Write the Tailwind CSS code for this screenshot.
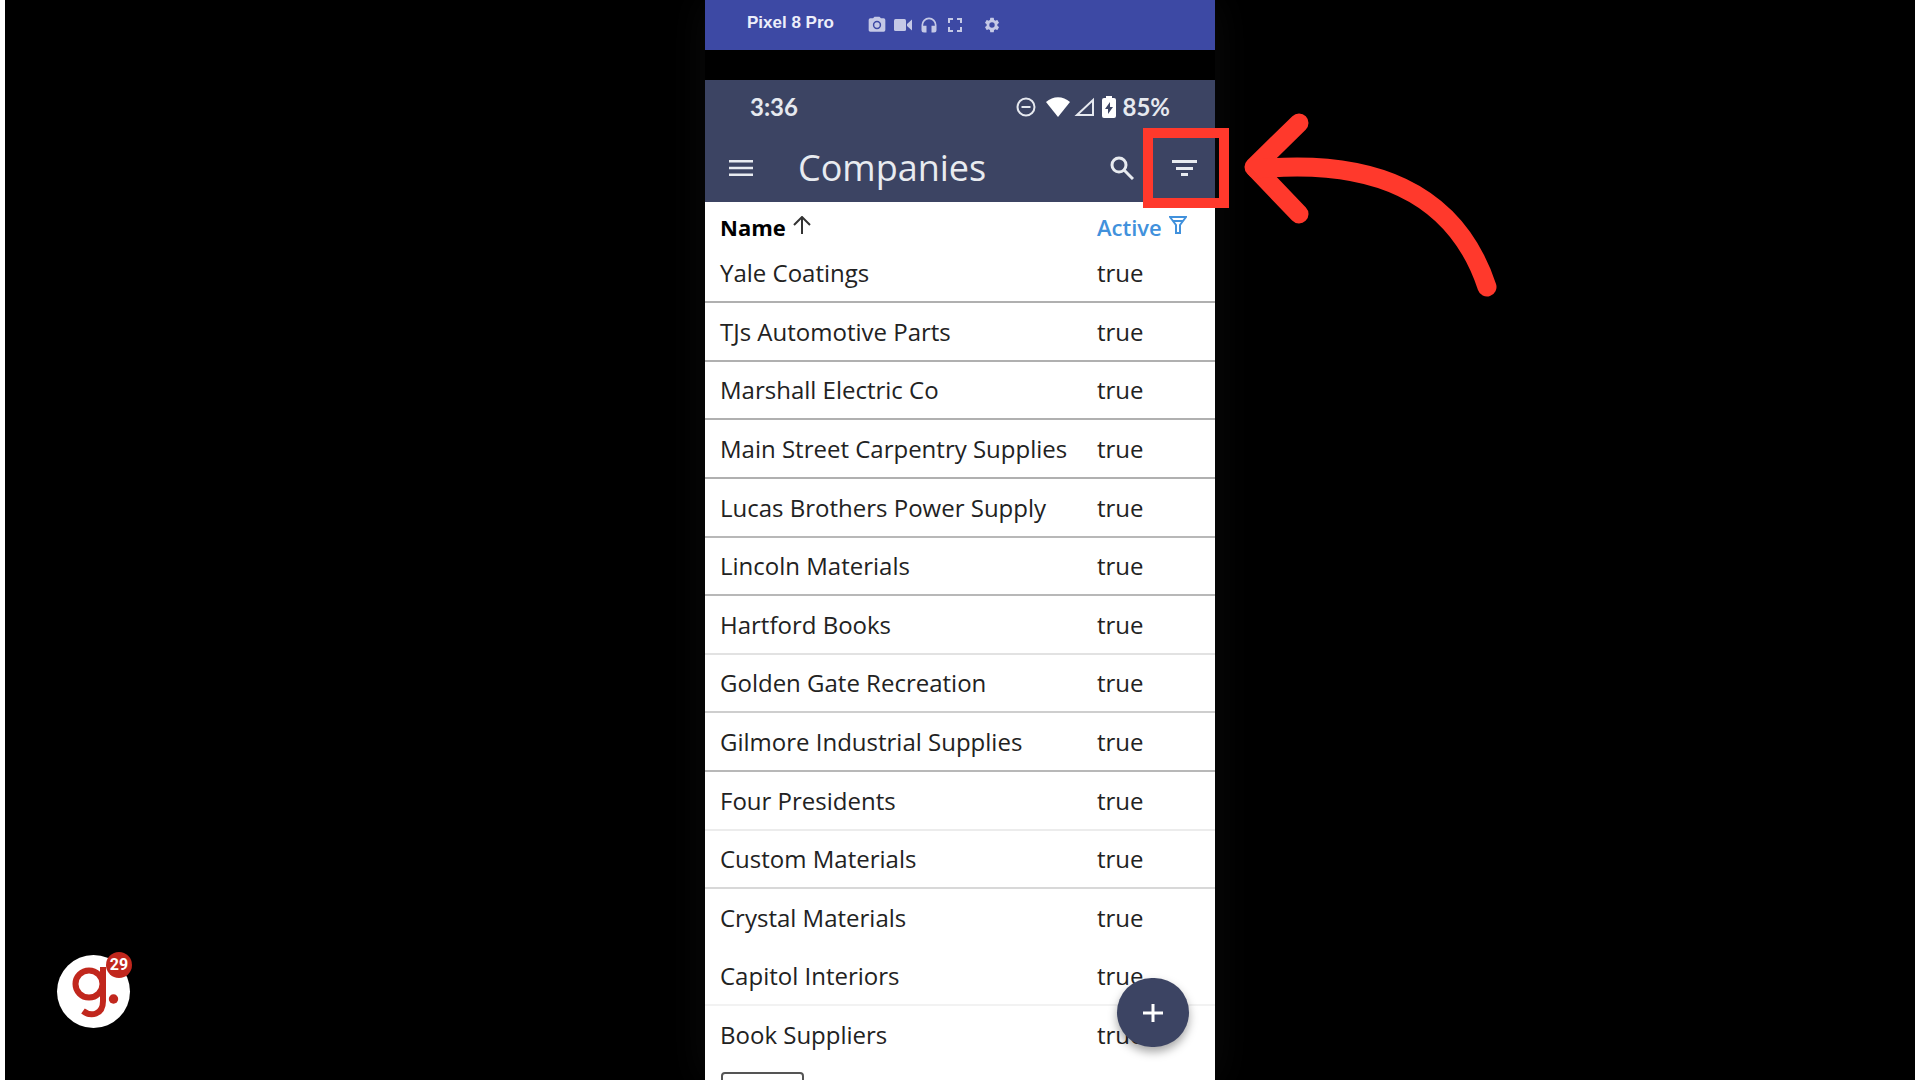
<!DOCTYPE html>
<html lang="en">
<head>
    <meta charset="UTF-8">
    <meta name="viewport" content="width=device-width, initial-scale=1.0">
    <title>Companies</title>
    <script src="https://cdn.jsdelivr.net/npm/@tailwindcss/browser@4"></script>
</head>
<body class="bg-black">
<div class="relative h-screen overflow-hidden border-x-[5px] border-white bg-black font-['Open_Sans',sans-serif]">

    <!-- Phone -->
    <main class="relative mx-auto flex h-full w-full max-w-[510px] flex-col bg-black shadow-[0_0_40px_#0c0c0c]">

        <!-- Emulator toolbar -->
        <div class="flex h-[50px] shrink-0 items-center bg-[#3d49a4] pb-1 pl-[42px] text-[#c5c9e6]">
            <span class="w-[120px] font-['Liberation_Sans',sans-serif] text-[17px] font-bold text-[#eceefa]">Pixel 8 Pro</span>
            <div class="flex items-center gap-[6px] pt-1">
                <button aria-label="Screenshot">
                    <svg class="size-5" viewBox="0 0 24 24" fill="currentColor"><circle cx="12" cy="12" r="3.2"/><path d="M9 2 7.2 4H4a2 2 0 0 0-2 2v12c0 1.1.9 2 2 2h16a2 2 0 0 0 2-2V6a2 2 0 0 0-2-2h-3.200L15 2H9zm3 15a5 5 0 1 1 0-10 5 5 0 0 1 0 10z"/></svg>
                </button>
                <button aria-label="Record">
                    <svg class="size-5" viewBox="0 0 20 20" fill="currentColor"><rect x="1" y="4" width="12" height="12" rx="1.500"/><path d="M14 9l5-4.500v11L14 11z"/></svg>
                </button>
                <button aria-label="Audio">
                    <svg class="size-5" viewBox="0 0 24 24" fill="currentColor"><path d="M12 3a9 9 0 0 0-9 9v6a3 3 0 0 0 3 3h3v-8H5v-1a7 7 0 0 1 14 0v1h-4v8h3a3 3 0 0 0 3-3v-6a9 9 0 0 0-9-9z"/></svg>
                </button>
                <button aria-label="Full screen">
                    <svg class="size-5" viewBox="0 0 20 20" fill="none" stroke="currentColor" stroke-width="2"><path d="M4 8V4h4M12 4h4v4M16 12v4h-4M8 16H4v-4"/></svg>
                </button>
                <button aria-label="Settings" class="ml-3">
                    <svg class="size-[18px]" viewBox="0 0 24 24" fill="currentColor"><path d="M19.140 12.940c.04-.3.06-.61.06-.94s-.02-.64-.07-.94l2.030-1.580a.49.49 0 0 0 .12-.61l-1.920-3.320a.49.49 0 0 0-.59-.22l-2.390.96a7 7 0 0 0-1.620-.94l-.36-2.540a.48.48 0 0 0-.48-.41h-3.840a.47.47 0 0 0-.47.41l-.36 2.540c-.59.24-1.130.57-1.620.94l-2.390-.96a.48.48 0 0 0-.59.22L2.740 8.870a.47.47 0 0 0 .12.61l2.030 1.580a7 7 0 0 0 0 1.880l-2.030 1.580a.49.49 0 0 0-.12.61l1.920 3.320c.12.22.37.29.59.22l2.390-.96c.5.38 1.030.7 1.620.94l.36 2.540c.05.24.24.41.48.41h3.840c.24 0 .44-.17.47-.41l.36-2.540a7 7 0 0 0 1.620-.94l2.390.96c.22.08.47 0 .59-.22l1.920-3.320a.47.47 0 0 0-.12-.61zM12 15.600a3.600 3.600 0 1 1 0-7.200 3.600 3.600 0 0 1 0 7.200z"/></svg>
                </button>
            </div>
        </div>

        <!-- Status bar and app bar -->
        <header class="mt-[30px] h-[122px] shrink-0 bg-[#3c4463] text-[#e8ebf0]">
            <div class="flex h-[54px] items-center px-[45px] font-['Lato',sans-serif] text-2xl font-bold text-[#e6e9ef]">
                <span class="grow">3:36</span>
                <svg class="mr-[10px] size-5" viewBox="0 0 20 20" fill="none" stroke="currentColor" stroke-width="2"><circle cx="10" cy="10" r="8.500"/><path d="M5.500 10h9"/></svg>
                <svg class="mr-1 h-5 w-6" viewBox="0 0 24 20" fill="#fff"><path d="M0 5C7-1.500 17-1.500 24 5L12 20z"/></svg>
                <svg class="mr-2 size-5" viewBox="0 0 20 20" fill="none" stroke="currentColor" stroke-width="2"><path d="M3 18L19 3v15z"/></svg>
                <svg class="mr-[6px] h-[22px] w-[14px]" viewBox="0 0 14 22"><path d="M4 0h6v2h2a2 2 0 0 1 2 2v16a2 2 0 0 1-2 2H2a2 2 0 0 1-2-2V4a2 2 0 0 1 2-2h2z" fill="#fff"/><path d="M8 6L3 13h3v5l5-7H8z" fill="#3c4463"/></svg>
                <span>85%</span>
            </div>
            <div class="flex h-[68px] items-center pr-[18px] pl-6">
                <button aria-label="Menu">
                    <svg class="h-4 w-6" viewBox="0 0 24 16" fill="currentColor"><path d="M0 0h24v2.500H0zM0 6.700h24v2.500H0zM0 13.400h24v2.500H0z"/></svg>
                </button>
                <h1 class="grow pl-[45px] text-[36px]/[48px]">Companies</h1>
                <button aria-label="Search">
                    <svg class="size-6" viewBox="0 0 24 24" fill="none" stroke="currentColor" stroke-width="3"><circle cx="9" cy="9" r="7"/><path d="M14 14l9 9"/></svg>
                </button>
                <button aria-label="Filter" class="ml-[38px]">
                    <svg class="h-4 w-[25px]" viewBox="0 0 25 16" fill="currentColor"><path d="M0 0h25v3H0zM4 7h17v3H4zM9 13h7v3H9z"/></svg>
                </button>
            </div>
        </header>

        <!-- Company list -->
        <div class="grow bg-white text-[24px]/[32px] text-[#222]">
            <table class="w-full table-fixed border-collapse text-left">
                <thead>
                    <tr class="h-[42px]">
                        <th class="w-[392px] pt-2 pb-0 pl-[15px] text-[22px]/[32px] font-bold text-black">
                            <span class="flex items-center gap-[7px]">Name
                                <svg class="mb-1 size-[18px]" viewBox="0 0 18 18" fill="none" stroke="#333" stroke-width="2"><path d="M9 18V2M1 9l8-8 8 8"/></svg>
                            </span>
                        </th>
                        <th class="pt-2 pb-0 text-[22px]/[32px] font-semibold text-[#4191dc]">
                            <span class="flex items-center gap-[7px]">Active
                                <svg class="mb-1 size-[18px]" viewBox="0 0 18 18" fill="none" stroke="currentColor" stroke-width="2"><path d="M1 1h16l-6 8v8H7V9zM4 5h10"/></svg>
                            </span>
                        </th>
                    </tr>
                </thead>
                <tbody>
                    <tr class="h-[58px] border-b-2 border-[#b0b0b0]"><td class="pl-[15px]">Yale Coatings</td><td>true</td></tr>
                    <tr class="h-[59px] border-b-2 border-[#b0b0b0]"><td class="pl-[15px]">TJs Automotive Parts</td><td>true</td></tr>
                    <tr class="h-[58px] border-b-2 border-[#b0b0b0]"><td class="pl-[15px]">Marshall Electric Co</td><td>true</td></tr>
                    <tr class="h-[59px] border-b-2 border-[#b0b0b0]"><td class="whitespace-nowrap pl-[15px]">Main Street Carpentry Supplies</td><td>true</td></tr>
                    <tr class="h-[59px] border-b-2 border-[#b8b8b8]"><td class="pl-[15px]">Lucas Brothers Power Supply</td><td>true</td></tr>
                    <tr class="h-[58px] border-b-2 border-[#b8b8b8]"><td class="pl-[15px]">Lincoln Materials</td><td>true</td></tr>
                    <tr class="h-[59px] border-b-2 border-[#e2e2e2]"><td class="pl-[15px]">Hartford Books</td><td>true</td></tr>
                    <tr class="h-[58px] border-b-2 border-[#cecece]"><td class="pl-[15px]">Golden Gate Recreation</td><td>true</td></tr>
                    <tr class="h-[59px] border-b-2 border-[#b8b8b8]"><td class="pl-[15px]">Gilmore Industrial Supplies</td><td>true</td></tr>
                    <tr class="h-[59px] border-b-2 border-[#ececec]"><td class="pl-[15px]">Four Presidents</td><td>true</td></tr>
                    <tr class="h-[58px] border-b-2 border-[#d8d8d8]"><td class="pl-[15px]">Custom Materials</td><td>true</td></tr>
                    <tr class="h-[59px] border-b-2 border-white"><td class="pl-[15px]">Crystal Materials</td><td>true</td></tr>
                    <tr class="h-[58px] border-b-2 border-[#f2f2f2]"><td class="pl-[15px]">Capitol Interiors</td><td>true</td></tr>
                    <tr class="h-[59px]"><td class="pl-[15px]">Book Suppliers</td><td>true</td></tr>
                </tbody>
            </table>
            <button aria-label="Next page" class="mt-2 ml-4 block h-12 w-[83px] rounded border-2 border-[#555]"></button>
        </div>

        <button aria-label="Add company" class="absolute right-[26px] bottom-[33px] flex h-[69px] w-[72px] items-center justify-center rounded-full bg-[#3c4463] shadow-[0_5px_10px_rgba(0,0,0,0.35)]">
            <svg class="size-5" viewBox="0 0 20 20" stroke="#fff" stroke-width="3"><path d="M10 1v18M0 10h20"/></svg>
        </button>

        <!-- Callout around the filter button -->
        <div class="absolute top-[128px] left-[438px] h-[80px] w-[86px] border-[10px] border-[#ff392c]"></div>
        <svg class="absolute top-[112px] left-[539px] h-[186px] w-[254px]" viewBox="1244 112 254 186" fill="none" stroke="#ff392c" stroke-width="19" stroke-linecap="round" stroke-linejoin="round">
            <path d="M1299 123L1254 167L1299 214"/>
            <path d="M1256 169C1370 158 1455 190 1487 287"/>
        </svg>
    </main>

    <!-- Guide launcher -->
    <button aria-label="Guide, 29 notifications" class="absolute bottom-[52px] left-[52px] size-[73px] rounded-full bg-white">
        <svg class="size-full" viewBox="57 955 73 73" fill="none" stroke="#c1271d" stroke-width="6">
            <circle cx="89" cy="984" r="13.500"/>
            <path d="M103 967V1001C103 1015 91 1017 83 1011"/>
            <circle cx="113.500" cy="999" r="4.700" fill="#c1271d" stroke="none"/>
        </svg>
        <span class="absolute -top-[3px] -right-[2px] flex size-[26px] items-center justify-center rounded-full bg-[#c1271d] font-['Roboto',sans-serif] text-base font-bold text-white">29</span>
    </button>
</div>
</body>
</html>
